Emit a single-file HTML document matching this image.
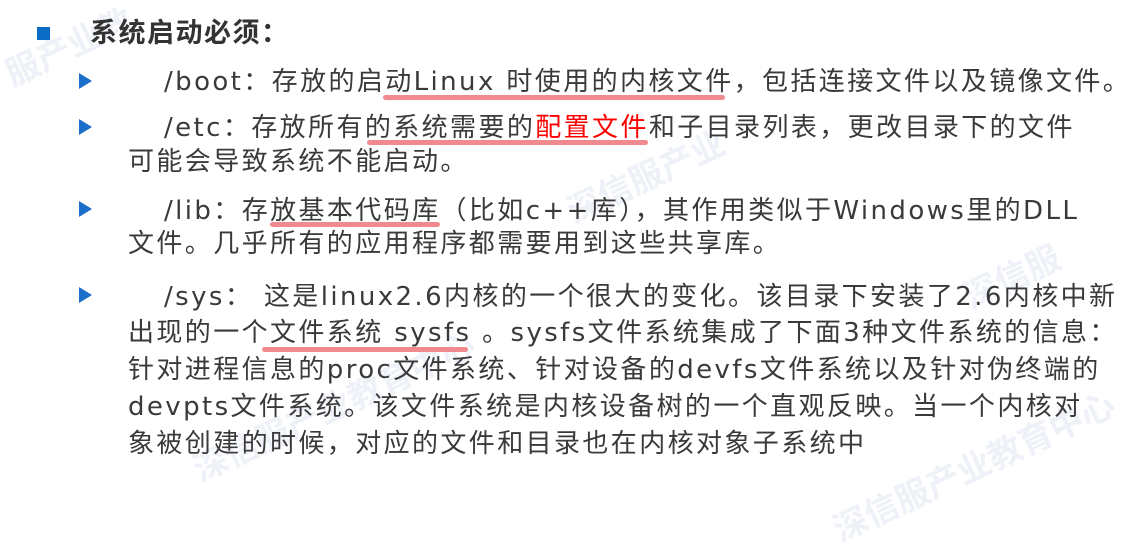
<!DOCTYPE html>
<html><head><meta charset="utf-8"><style>
body{margin:0;width:1140px;height:501px;background:#fff;overflow:hidden;position:relative;font-family:"DejaVu Sans","Noto Sans CJK SC",sans-serif;color:#3a3a3a}
.l{position:absolute;font-size:26px;line-height:34px;white-space:nowrap;letter-spacing:2.4px}
.a{position:absolute;left:79px;width:0;height:0;border-top:8px solid transparent;border-bottom:8px solid transparent;border-left:13px solid #1a6fc8}
.u{position:absolute;height:5px;border-radius:3px;background:#f08a8e}
.r{color:#f00}
.wm{position:absolute;color:#eef2f8;font-size:34px;transform:rotate(-25deg);font-weight:bold}
</style></head><body>
<div class="wm" style="left:0;top:20px">服产业教</div>
<div class="wm" style="left:560px;top:150px">深信服产业</div>
<div class="wm" style="left:180px;top:380px">深信服产业教育中心</div>
<div class="wm" style="left:820px;top:440px">深信服产业教育中心</div>
<div class="wm" style="left:960px;top:250px">深信服</div>
<div style="position:absolute;left:37px;top:27px;width:13px;height:13px;background:#0a6cc4"></div>
<div class="l" style="left:90px;top:17px;font-weight:bold;font-size:27px;color:#333;letter-spacing:1.5px">系统启动必须：</div>
<div class="a" style="top:73px"></div>
<div class="l" style="left:164px;top:65px">/boot：存放的启动Linux 时使用的内核文件，包括连接文件以及镜像文件。</div>
<div class="u" style="left:383px;top:95px;width:342px"></div>
<div class="a" style="top:119px"></div>
<div class="l" style="left:164px;top:111px">/etc：存放所有的系统需要的<span class="r">配置文件</span>和子目录列表，更改目录下的文件</div>
<div class="u" style="left:367px;top:140px;width:281px"></div>
<div class="l" style="left:128px;top:145px">可能会导致系统不能启动。</div>
<div class="a" style="top:201px"></div>
<div class="l" style="left:164px;top:194px">/lib：存放基本代码库（比如c++库），其作用类似于Windows里的DLL</div>
<div class="u" style="left:270px;top:222px;width:170px"></div>
<div class="l" style="left:128px;top:227px">文件。几乎所有的应用程序都需要用到这些共享库。</div>
<div class="a" style="top:287px"></div>
<div class="l" style="left:164px;top:280px">/sys： 这是linux2.6内核的一个很大的变化。该目录下安装了2.6内核中新</div>
<div class="l" style="left:128px;top:316px">出现的一个文件系统 sysfs 。sysfs文件系统集成了下面3种文件系统的信息：</div>
<div class="u" style="left:262px;top:347px;width:206px"></div>
<div class="l" style="left:128px;top:353px">针对进程信息的proc文件系统、针对设备的devfs文件系统以及针对伪终端的</div>
<div class="l" style="left:128px;top:390px">devpts文件系统。该文件系统是内核设备树的一个直观反映。当一个内核对</div>
<div class="l" style="left:128px;top:427px">象被创建的时候，对应的文件和目录也在内核对象子系统中</div>
</body></html>
